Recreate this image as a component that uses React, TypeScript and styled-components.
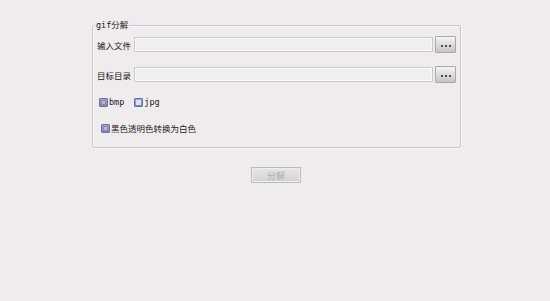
import styled, { createGlobalStyle } from 'styled-components';

const GlobalStyle = createGlobalStyle`
  html, body {
    margin: 0;
    padding: 0;
    background: #efebef;
  }
  body {
    font-family: "DejaVu Sans Mono", "Noto Sans CJK SC", monospace;
    font-size: 9px;
    color: #202020;
  }
`;

const Page = styled.div`
  width: 550px;
  height: 301px;
  padding-top: 25px;
  box-sizing: border-box;
  display: flex;
  flex-direction: column;
  align-items: flex-start;
`;

const Group = styled.div`
  position: relative;
  margin-left: 92px;
  width: 369px;
  height: 123px;
  box-sizing: border-box;
  border: 1px solid #c9c5c9;
  border-radius: 2px;
  box-shadow: inset 1px 1px 0 #f8f6f8, 1px 1px 0 #f8f6f8;
  padding: 10px 3px 0 4px;
  display: flex;
  flex-direction: column;
`;

const Title = styled.span`
  position: absolute;
  top: -7px;
  left: 2px;
  padding: 0 1px;
  background: #efebef;
  line-height: 12px;
  font-size: 8.5px;
`;

const FileRow = styled.div<{ $gap?: number }>`
  display: flex;
  align-items: center;
  height: 17px;
  margin-top: ${(p) => p.$gap ?? 0}px;
`;

const Label = styled.span`
  width: 37px;
  font-family: "Noto Sans CJK SC", sans-serif;
  font-size: 8.5px;
  white-space: nowrap;
`;

const PathInput = styled.div`
  width: 299px;
  height: 15px;
  box-sizing: border-box;
  border: 1px solid #cbc7cb;
  background: #f1eef1;
  box-shadow: inset 0 0 0 1px #fbfafb;
`;

const BrowseButton = styled.div`
  margin-left: 2px;
  width: 21px;
  height: 17px;
  box-sizing: border-box;
  border: 1px solid #a9a7a9;
  border-radius: 1px;
  background: linear-gradient(#f4f4f4, #d8d8d8 60%, #c4c4c4);
  display: flex;
  align-items: center;
  justify-content: center;
  gap: 2px;
  padding-top: 3px;
`;

const Dot = styled.span`
  width: 2px;
  height: 2px;
  background: #505050;
`;

const CheckRow = styled.div<{ $gap: number; $indent: number }>`
  display: flex;
  align-items: center;
  gap: 10px;
  height: 11px;
  margin-top: ${(p) => p.$gap}px;
  padding-left: ${(p) => p.$indent}px;
`;

const Check = styled.label`
  display: flex;
  align-items: center;
  gap: 1px;
`;

const Box = styled.span<{ $checked?: boolean }>`
  width: 9px;
  height: 9px;
  box-sizing: border-box;
  border: 1px solid #5d7a9c;
  border-radius: 1px;
  background: linear-gradient(#8fb0d4, #6a8db6);
  display: flex;
  align-items: center;
  justify-content: center;

  &::after {
    content: '';
    width: 5px;
    height: 5px;
    background: ${(p) => (p.$checked ? '#d9a6d3' : '#eed9ee')};
    box-shadow: ${(p) => (p.$checked ? 'inset 0 0 0 1px #b07aa8' : 'none')};
  }
`;

const CheckText = styled.span<{ $cjk?: boolean }>`
  font-family: ${(p) => (p.$cjk ? '"Noto Sans CJK SC", sans-serif' : '"DejaVu Sans Mono", monospace')};
  font-size: ${(p) => (p.$cjk ? 8.5 : 8.5)}px;
  line-height: 11px;
`;

const SplitButton = styled.div`
  align-self: flex-start;
  margin: 19px 0 0 251px;
  width: 50px;
  height: 16px;
  box-sizing: border-box;
  border: 1px solid #bdbbbd;
  background: linear-gradient(#e6e6e6, #d2d2d2);
  box-shadow: inset 0 0 0 1px #eeeeee;
  color: #aeaeae;
  font-family: "Noto Sans CJK SC", sans-serif;
  font-size: 9px;
  display: flex;
  align-items: center;
  justify-content: center;
`;

const Dots = () => (
  <BrowseButton>
    <Dot />
    <Dot />
    <Dot />
  </BrowseButton>
);

export default function App() {
  return (
    <>
      <GlobalStyle />
      <Page>
        <Group>
          <Title>gif分解</Title>
          <FileRow>
            <Label>输入文件</Label>
            <PathInput />
            <Dots />
          </FileRow>
          <FileRow $gap={13}>
            <Label>目标目录</Label>
            <PathInput />
            <Dots />
          </FileRow>
          <CheckRow $gap={14} $indent={2}>
            <Check>
              <Box $checked />
              <CheckText>bmp</CheckText>
            </Check>
            <Check>
              <Box />
              <CheckText>jpg</CheckText>
            </Check>
          </CheckRow>
          <CheckRow $gap={15} $indent={4}>
            <Check>
              <Box $checked />
              <CheckText $cjk>黑色透明色转换为白色</CheckText>
            </Check>
          </CheckRow>
        </Group>
        <SplitButton>分解</SplitButton>
      </Page>
    </>
  );
}
